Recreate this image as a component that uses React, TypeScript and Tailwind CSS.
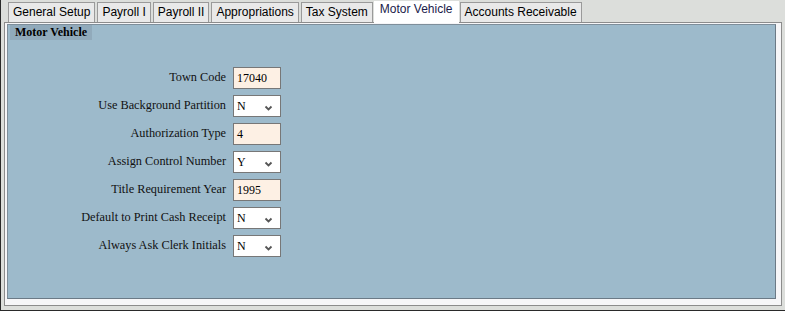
import React from "react";

const tabs = [
  "General Setup",
  "Payroll I",
  "Payroll II",
  "Appropriations",
  "Tax System",
  "Motor Vehicle",
  "Accounts Receivable",
];

type Row = { label: string; value: string; select?: boolean };
const rows: Row[] = [
  { label: "Town Code", value: "17040" },
  { label: "Use Background Partition", value: "N", select: true },
  { label: "Authorization Type", value: "4" },
  { label: "Assign Control Number", value: "Y", select: true },
  { label: "Title Requirement Year", value: "1995" },
  { label: "Default to Print Cash Receipt", value: "N", select: true },
  { label: "Always Ask Clerk Initials", value: "N", select: true },
];

function Chevron() {
  return (
    <svg width="9" height="6" viewBox="0 0 9 6" className="absolute right-[7px] top-[9px]">
      <path d="M1.5 1.5 L4.5 4.5 L7.5 1.5" fill="none" stroke="#555" strokeWidth="1.8" />
    </svg>
  );
}

export default function App() {
  return (
    <div className="w-[785px] h-[311px] bg-[#dcdedb] border-l border-b border-[#2a2a2a] flex flex-col overflow-hidden">
      <div className="flex items-end h-[22px] pl-[7px] gap-[2px]" style={{ fontFamily: "Arial, 'Liberation Sans', sans-serif" }}>
        {tabs.map((t) =>
          t === "Motor Vehicle" ? (
            <div
              key={t}
              className="h-[22px] px-[6px] bg-white text-[12px] leading-[17px] text-[#1a1a4a] -mx-[1px] -mb-[1px] z-10"
            >
              {t}
            </div>
          ) : (
            <div
              key={t}
              className="h-[20px] px-[4px] bg-[#e9e9e9] border border-b-0 border-[#9a9a9a] text-[12px] leading-[19px] text-black"
            >
              {t}
            </div>
          )
        )}
      </div>
      <div className="ml-[3px] mr-[3px] h-[284px] bg-[#f6f6f8] border border-[#8c8c8c] pl-[2px] pr-[5px] pt-[1px] pb-[6px] flex flex-col">
        <div className="flex-1 bg-[#9dbacb] border border-[#7e8e9a] border-r-[#6b7a86] border-b-[#6b7a86] pl-[2px] pt-[0px]" style={{ fontFamily: "'Times New Roman', 'Liberation Serif', serif" }}>
          <div className="block w-fit bg-[#91aabb] px-[5px] text-[12px] leading-[15px] font-bold text-black">
            Motor Vehicle
          </div>
          <div className="mt-[27px] flex flex-col gap-[6px]">
            {rows.map((r) => (
              <div key={r.label} className="flex items-center h-[22px]">
                <div className="w-[223px] text-right text-[12.3px] leading-[14px] text-[#111] pr-[7px] -mt-[3px]">
                  {r.label}
                </div>
                {r.select ? (
                  <div className="relative w-[48px] h-[22px] bg-white border border-[#777] text-[12px] leading-[20px] pl-[3px] text-black">
                    {r.value}
                    <Chevron />
                  </div>
                ) : (
                  <div className="w-[48px] h-[22px] bg-[#fdf0e4] border border-[#777] text-[12px] leading-[20px] pl-[3px] text-black">
                    {r.value}
                  </div>
                )}
              </div>
            ))}
          </div>
        </div>
      </div>
    </div>
  );
}
